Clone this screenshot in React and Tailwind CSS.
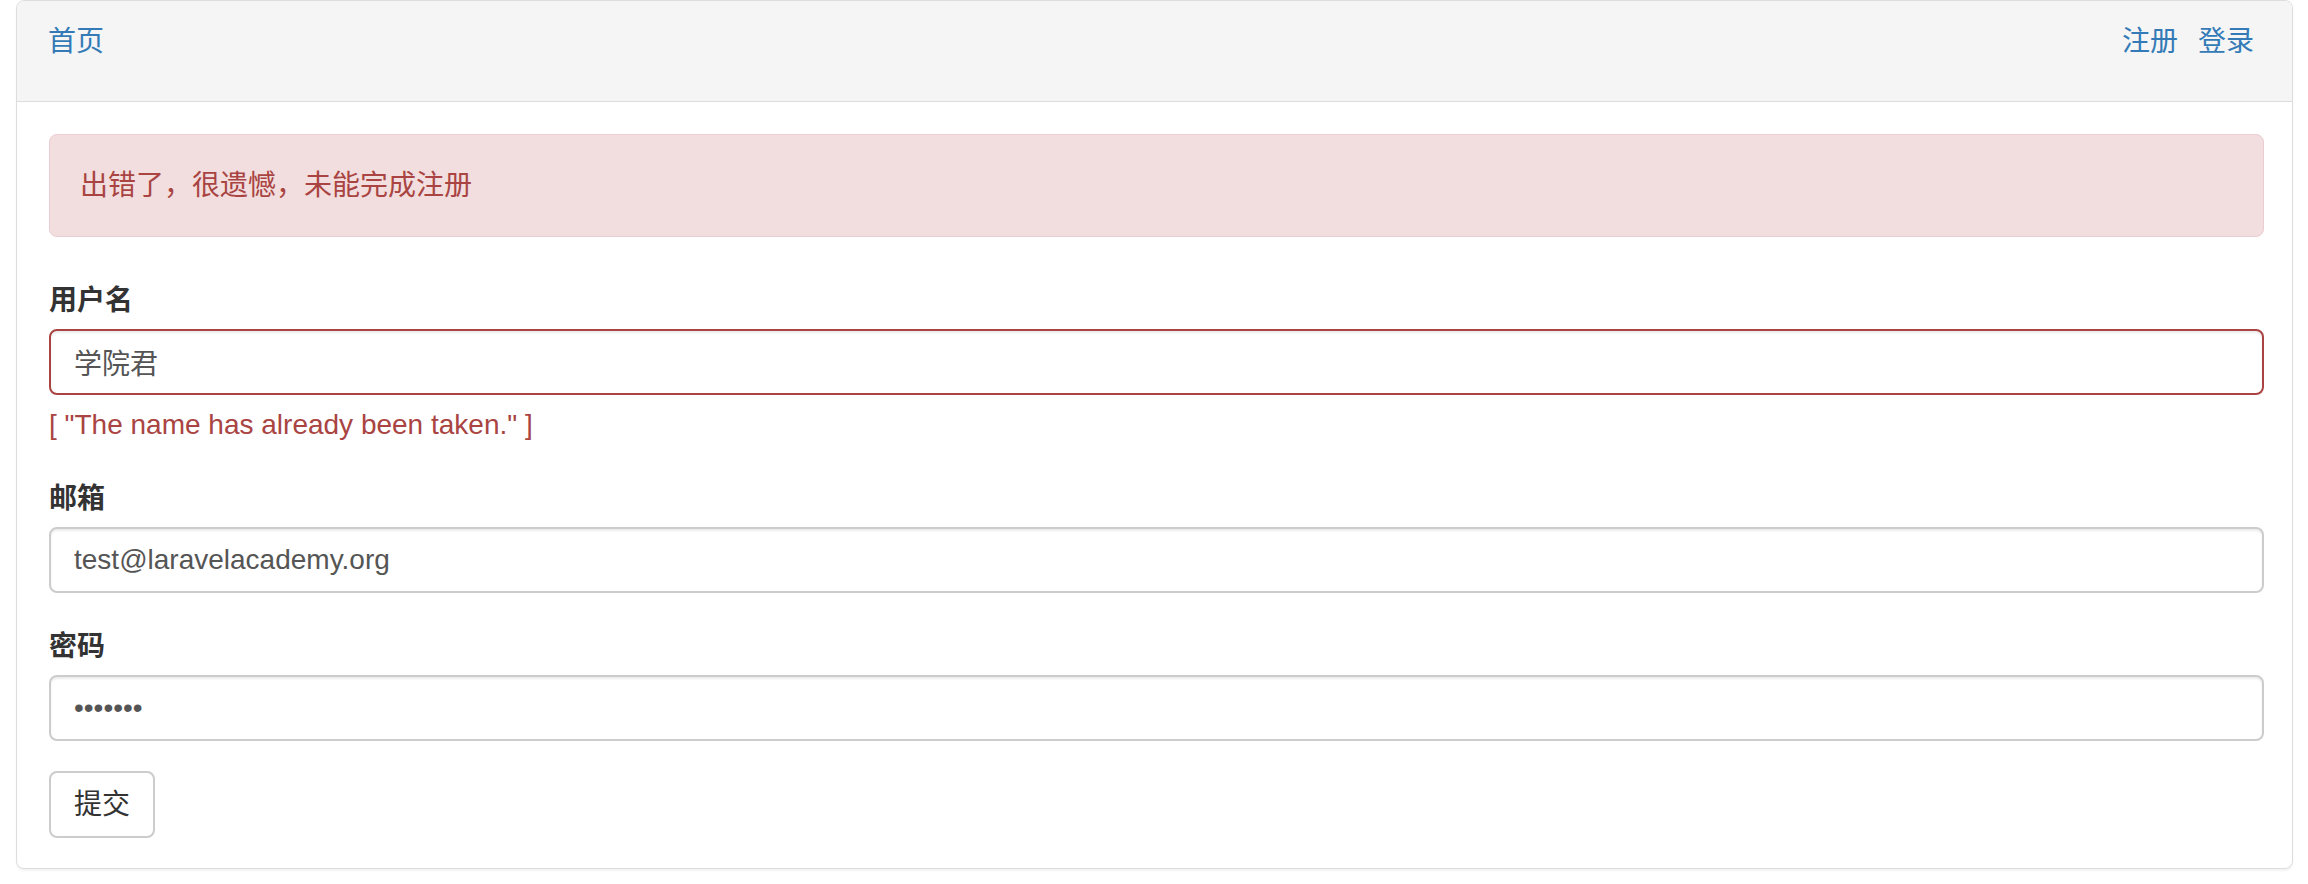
export default function App() {
  const font = { fontFamily: '"Liberation Sans", "Noto Sans CJK SC", sans-serif' };

  return (
    <div className="min-h-screen bg-white pl-[16px] pr-[15px] text-[28px] text-[#333]" style={font}>
      <div className="rounded-[8px] border border-[#ddd] bg-white shadow-[0_2px_2px_rgba(0,0,0,0.05)]">
        {/* heading */}
        <div className="flex h-[101px] items-start justify-between rounded-t-[7px] border-b border-[#ddd] bg-[#f5f5f5] pl-[31px] pr-[38px] pt-[21px] leading-[40px] text-[#337ab7]">
          <a className="cursor-pointer">首页</a>
          <div className="flex gap-[20px]">
            <a className="cursor-pointer">注册</a>
            <a className="cursor-pointer">登录</a>
          </div>
        </div>

        {/* body */}
        <div className="pb-[30px] pl-[32px] pr-[28px] pt-[32px]">
          <div className="mb-[40px] h-[103px] rounded-[8px] border border-[#ebccd1] bg-[#f2dede] px-[30px] py-[30px] leading-[41px] text-[#a94442]">
            出错了，很遗憾，未能完成注册
          </div>

          <form onSubmit={(e) => e.preventDefault()}>
            <div className="mb-[30px]">
              <label className="mb-[10px] block h-[42px] font-bold leading-[48px]">用户名</label>
              <input
                className="block h-[66px] w-full rounded-[8px] border-2 border-[#a94442] px-[23px] text-[28px] text-[#555] shadow-[inset_0_2px_2px_rgba(0,0,0,0.075)] outline-none"
                style={font}
                defaultValue="学院君"
              />
              <div className="mt-[10px] leading-[40px] text-[#a94442]">[ "The name has already been taken." ]</div>
            </div>

            <div className="mb-[30px]">
              <label className="mb-[10px] block h-[42px] font-bold leading-[48px]">邮箱</label>
              <input
                className="block h-[66px] w-full rounded-[8px] border-2 border-[#ccc] px-[23px] text-[28px] text-[#555] shadow-[inset_0_2px_2px_rgba(0,0,0,0.075)] outline-none"
                style={font}
                defaultValue="test@laravelacademy.org"
              />
            </div>

            <div className="mb-[30px]">
              <label className="mb-[10px] block h-[42px] font-bold leading-[48px]">密码</label>
              <input
                type="password"
                className="block h-[66px] w-full rounded-[8px] border-2 border-[#ccc] px-[23px] text-[28px] text-[#555] shadow-[inset_0_2px_2px_rgba(0,0,0,0.075)] outline-none"
                style={font}
                defaultValue="1234567"
              />
            </div>

            <button
              type="submit"
              className="h-[67px] rounded-[8px] border-2 border-[#ccc] bg-white px-[23px] text-[28px] leading-[40px] text-[#333]"
              style={font}
            >
              提交
            </button>
          </form>
        </div>
      </div>
    </div>
  );
}
